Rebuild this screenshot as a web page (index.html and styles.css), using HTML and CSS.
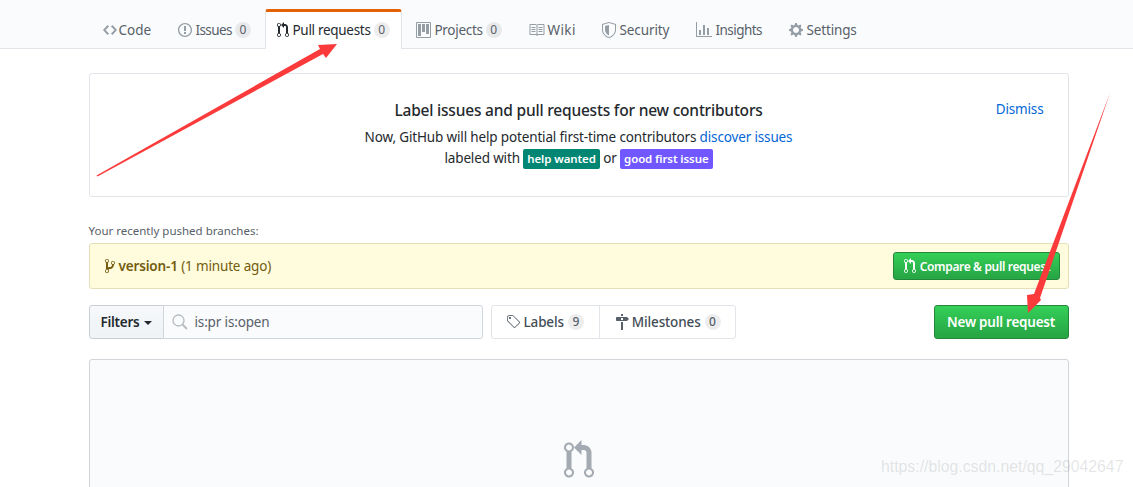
FILE: index.html
```html
<!DOCTYPE html>
<html lang="en">
<head>
<meta charset="utf-8">
<title>Pull requests</title>
<link rel="stylesheet" href="styles.css">
</head>
<body>
<nav class="tabbar">
  <div class="container tabs">
    <a class="tab t-code"><svg class="ic" width="16" height="16" viewBox="0 0 14 16"><path d="M9.5 3 8 4.5 11.5 8 8 11.5 9.5 13 14 8zm-5 0L0 8l4.500 5L6 11.500 2.500 8 6 4.500z"/></svg>Code</a>
    <a class="tab t-issues"><svg class="ic" width="14" height="16" viewBox="0 0 14 16"><path d="M7 2.300c3.140 0 5.700 2.560 5.700 5.700s-2.560 5.700-5.700 5.700A5.710 5.710 0 0 1 1.300 8c0-3.140 2.560-5.700 5.700-5.700zM7 1C3.140 1 0 4.140 0 8s3.140 7 7 7 7-3.140 7-7-3.140-7-7-7zm1 3H6v5h2V4zm0 6H6v2h2v-2z"/></svg>Issues<span class="count">0</span></a>
    <a class="tab selected"><svg class="ic" width="12" height="16" viewBox="0 0 12 16"><path d="M11 11.280V5c-.030-.780-.340-1.470-.940-2.060C9.460 2.350 8.780 2.030 8 2H7V0L4 3l3 3V4h1c.270.020.480.110.690.310.210.200.300.420.310.690v6.280A1.993 1.993 0 0 0 10 15a1.993 1.993 0 0 0 1-3.720zm-1 2.920c-.660 0-1.200-.550-1.200-1.200 0-.650.550-1.200 1.200-1.200.650 0 1.200.550 1.200 1.200 0 .650-.550 1.200-1.200 1.200zM4 3c0-1.110-.890-2-2-2a1.993 1.993 0 0 0-1 3.720v6.560A1.993 1.993 0 0 0 2 15a1.993 1.993 0 0 0 1-3.720V4.720c.590-.340 1-.980 1-1.720zm-.800 10c0 .660-.550 1.200-1.200 1.200-.650 0-1.200-.550-1.200-1.200 0-.650.550-1.200 1.200-1.200.650 0 1.200.550 1.200 1.200zM2 4.200C1.340 4.200.800 3.650.800 3c0-.650.550-1.200 1.200-1.200.650 0 1.200.550 1.200 1.200 0 .650-.550 1.200-1.200 1.200z"/></svg>Pull requests<span class="count">0</span></a>
    <a class="tab t-projects"><svg class="ic" width="15" height="16" viewBox="0 0 15 16"><path fill-rule="evenodd" d="M10 12h3V2h-3v10zm-4-2h3V2H6v8zm-4 4h3V2H2v12zm-1 1h13V1H1v14zM14 0H1a1 1 0 0 0-1 1v14a1 1 0 0 0 1 1h13a1 1 0 0 0 1-1V1a1 1 0 0 0-1-1z"/></svg>Projects<span class="count">0</span></a>
    <a class="tab t-wiki"><svg class="ic" width="16" height="16" viewBox="0 0 16 16"><path d="M3 5h4v1H3V5zm0 3h4V7H3v1zm0 2h4V9H3v1zm11-5h-4v1h4V5zm0 2h-4v1h4V7zm0 2h-4v1h4V9zm2-6v9c0 .550-.450 1-1 1H9.500l-1 1-1-1H2c-.550 0-1-.450-1-1V3c0-.550.450-1 1-1h5.500l1 1 1-1H15c.550 0 1 .450 1 1zm-8 .500L7.500 3H2v9h6V3.500zm7-.500H9.500l-.500.500V12h6V3z" transform="translate(-.500 0)"/></svg>Wiki</a>
    <a class="tab t-security"><svg class="ic" width="14" height="16" viewBox="0 0 14 16"><path fill-rule="evenodd" d="M0 2l7-2 7 2v6.020C14 12.690 8.990 16 7 16c-1.990 0-7-3.310-7-7.980V2zm1 .750v5.270C1 11.990 5.370 15 7 15s6-3.010 6-6.980V2.750L7 1 1 2.750zM3 4l4-1v10.500C5.500 12.700 3 10.500 3 8V4z"/></svg>Security</a>
    <a class="tab t-insights"><svg class="ic" width="16" height="16" viewBox="0 0 16 16"><path d="M16 14v1H0V0h1v14h15zM5 13H3V8h2v5zm4 0H7V3h2v10zm4 0h-2V6h2v7z"/></svg>Insights</a>
    <a class="tab t-settings"><svg class="ic" width="14" height="16" viewBox="0 0 14 16"><path fill-rule="evenodd" d="M14 8.770v-1.600l-1.940-.640-.450-1.090.880-1.840-1.130-1.130-1.810.910-1.090-.450-.690-1.920h-1.600l-.630 1.940-1.110.450-1.840-.880-1.130 1.130.910 1.810-.450 1.090L0 7.230v1.590l1.940.640.450 1.090-.880 1.840 1.130 1.130 1.810-.910 1.090.450.690 1.920h1.590l.630-1.940 1.110-.450 1.840.880 1.130-1.130-.920-1.810.470-1.090L14 8.750v.020zM7 11c-1.660 0-3-1.340-3-3s1.340-3 3-3 3 1.340 3 3-1.340 3-3 3z"/></svg>Settings</a>
  </div>
</nav>

<main class="container">
  <section class="banner">
    <a class="dismiss">Dismiss</a>
    <h2 class="banner-title">Label issues and pull requests for new contributors</h2>
    <p class="banner-text">Now, GitHub will help potential first-time contributors <a class="link">discover issues</a><br>labeled with <span class="label teal">help wanted</span> or <span class="label purple">good first issue</span></p>
  </section>

  <p class="pushed-title">Your recently pushed branches:</p>
  <div class="pushed">
    <div class="pushed-info"><svg class="branch" width="10" height="16" viewBox="0 0 10 16"><path d="M10 5c0-1.110-.890-2-2-2a1.993 1.993 0 0 0-1 3.720v.300c-.020.520-.230.980-.630 1.380-.400.400-.860.610-1.380.630-.830.020-1.480.160-2 .450V4.720a1.993 1.993 0 0 0-1-3.720C.880 1 0 1.890 0 3a2 2 0 0 0 1 1.720v6.560c-.590.350-1 .990-1 1.720 0 1.110.890 2 2 2 1.110 0 2-.890 2-2 0-.530-.200-1-.530-1.360.090-.060.480-.410.590-.470.250-.110.560-.170.940-.170 1.050-.050 1.950-.450 2.750-1.250S8.950 7.770 9 6.730h-.020C9.590 6.370 10 5.730 10 5zM2 1.800c.660 0 1.200.550 1.200 1.200 0 .650-.550 1.200-1.200 1.200C1.350 4.200.800 3.650.800 3c0-.650.550-1.200 1.200-1.200zm0 12.410c-.660 0-1.200-.550-1.200-1.200 0-.650.550-1.200 1.200-1.200.650 0 1.200.550 1.200 1.200 0 .650-.550 1.200-1.200 1.200zm6-8c-.660 0-1.200-.550-1.200-1.200 0-.650.550-1.200 1.200-1.200.650 0 1.200.550 1.200 1.200 0 .650-.550 1.200-1.200 1.200z"/></svg><strong>version-1</strong> (1 minute ago)</div>
    <a class="btn-green small"><svg class="btn-ic" width="12" height="16" viewBox="0 0 12 16"><path d="M11 11.280V5c-.030-.780-.340-1.470-.940-2.060C9.460 2.350 8.780 2.030 8 2H7V0L4 3l3 3V4h1c.270.020.480.110.690.310.210.200.300.420.310.690v6.280A1.993 1.993 0 0 0 10 15a1.993 1.993 0 0 0 1-3.720zm-1 2.920c-.660 0-1.200-.550-1.200-1.200 0-.650.550-1.200 1.200-1.200.650 0 1.200.550 1.200 1.200 0 .650-.550 1.200-1.200 1.200zM4 3c0-1.110-.890-2-2-2a1.993 1.993 0 0 0-1 3.720v6.560A1.993 1.993 0 0 0 2 15a1.993 1.993 0 0 0 1-3.720V4.720c.590-.340 1-.980 1-1.720zm-.800 10c0 .660-.550 1.200-1.200 1.200-.650 0-1.200-.550-1.200-1.200 0-.650.550-1.200 1.200-1.200.650 0 1.200.550 1.200 1.200zM2 4.200C1.340 4.200.800 3.650.800 3c0-.650.550-1.200 1.200-1.200.650 0 1.200.550 1.200 1.200 0 .650-.550 1.200-1.200 1.200z"/></svg>Compare &amp; pull request</a>
  </div>

  <div class="toolbar">
    <div class="search">
      <button class="filters">Filters<span class="caret"></span></button>
      <div class="search-input"><svg class="search-ic" width="16" height="16" viewBox="0 0 16 16"><circle cx="6.500" cy="6.500" r="5.500" fill="none" stroke="currentColor" stroke-width="1.300"/><path d="M10.500 10.500 15 15" stroke="currentColor" stroke-width="1.800" fill="none"/></svg>is:pr is:open</div>
    </div>
    <div class="nav-links">
      <a class="nav-link"><svg class="nav-ic" width="15" height="16" viewBox="0 0 15 16"><path d="M7.730 1.730C7.260 1.260 6.620 1 5.960 1H3.500C2.130 1 1 2.130 1 3.500v2.470c0 .660.270 1.300.730 1.770l6.060 6.060c.390.390 1.020.390 1.410 0l4.590-4.590a.996.996 0 0 0 0-1.410L7.730 1.730zM2.380 7.090c-.310-.300-.470-.700-.470-1.130V3.500c0-.880.720-1.600 1.600-1.600h2.470c.420 0 .830.160 1.130.470l6.140 6.130-4.730 4.730-6.140-6.140zM3.010 3h2v2H3V3h.010z"/></svg>Labels<span class="count">9</span></a>
      <a class="nav-link"><svg class="nav-ic dark" width="14" height="16" viewBox="0 0 14 16"><path fill-rule="evenodd" d="M8 2H6V0h2v2zm4 5H2c-.550 0-1-.450-1-1V4c0-.550.450-1 1-1h10l2 2-2 2zM8 4H6v2h2V4zM6 16h2V8H6v8z"/></svg>Milestones<span class="count">0</span></a>
    </div>
    <a class="btn-green large">New pull request</a>
  </div>

  <section class="blank">
    <svg class="blank-ic" width="30" height="40" viewBox="0 0 12 16"><path d="M11 11.280V5c-.030-.780-.340-1.470-.940-2.060C9.460 2.350 8.780 2.030 8 2H7V0L4 3l3 3V4h1c.270.020.480.110.690.310.210.200.300.420.310.690v6.280A1.993 1.993 0 0 0 10 15a1.993 1.993 0 0 0 1-3.720zm-1 2.920c-.660 0-1.200-.550-1.200-1.200 0-.650.550-1.200 1.200-1.200.650 0 1.200.550 1.200 1.200 0 .650-.550 1.200-1.200 1.200zM4 3c0-1.110-.890-2-2-2a1.993 1.993 0 0 0-1 3.720v6.560A1.993 1.993 0 0 0 2 15a1.993 1.993 0 0 0 1-3.720V4.720c.590-.340 1-.980 1-1.720zm-.800 10c0 .660-.550 1.200-1.200 1.200-.650 0-1.200-.550-1.200-1.200 0-.650.550-1.200 1.200-1.200.650 0 1.200.550 1.200 1.200zM2 4.200C1.340 4.200.800 3.650.800 3c0-.650.550-1.200 1.200-1.200.650 0 1.200.550 1.200 1.200 0 .650-.550 1.200-1.200 1.200z"/></svg>
  </section>
</main>

<svg class="arrows" width="1133" height="487" viewBox="0 0 1133 487">
  <polygon points="96.500,175.500 320,49 318,45 337,44 326,58 323,54 97.500,176.500"/>
  <polygon points="1110,93 1040,298 1041,300 1028,313 1027,295 1034,294"/>
</svg>
<span class="watermark">https://blog.csdn.net/qq_29042647</span>
</body>
</html>
```

FILE: styles.css
```css
* { box-sizing: border-box; }
html, body { margin: 0; height: 487px; overflow: hidden; }
body {
  background: #fff;
  color: #24292e;
  font-family: "Noto Sans", "Open Sans", sans-serif;
  font-size: 13.500px;
  letter-spacing: -.15px;
  position: relative;
}
.container { width: 980px; margin: 0 auto; position: relative; left: 12px; }
.tabbar { height: 49px; background: #fafbfc; border-bottom: 1px solid #e1e4e8; }
.tabs { display: flex; height: 49px; padding-top: 9px; }
.tab {
  display: flex; align-items: center; height: 40px;
  padding: 2px 0 1px 13px; color: #586069; white-space: nowrap;
  letter-spacing: -.3px;
}
.tab .ic { fill: #959da5; margin-right: 4px; flex: none; }
.t-code { flex: 0 0 76px; letter-spacing: 0; }
.t-code .ic { margin-right: 1px; }
.t-issues { flex: 0 0 100px; letter-spacing: -.6px; }
.t-issues .count { margin-left: 3px; }
.t-projects { flex: 0 0 113px; padding-left: 14px; }
.t-projects .count { margin-left: 3px; }
.t-wiki { flex: 0 0 74px; padding-left: 14px; letter-spacing: .4px; }
.t-wiki .ic { margin-right: 3px; }
.t-security { flex: 0 0 94px; letter-spacing: -.1px; }
.t-insights { flex: 0 0 93px; letter-spacing: -.55px; }
.t-settings { letter-spacing: -.15px; }
.tab.selected {
  flex: 0 0 137px;
  color: #24292e; background: #fff;
  border: 1px solid #e1e4e8; border-top: 3px solid #e36209; border-bottom: 0;
  border-radius: 3px 3px 0 0; padding: 0 0 2px 11px;
}
.tab.selected .ic { fill: #24292e; }
.tab.selected .count { margin-left: 3px; }
.count {
  display: inline-block; min-width: 16px; padding: 0 4px; margin-left: 4px;
  font-size: 12px; line-height: 16px; text-align: center; letter-spacing: 0;
  background: rgba(27,31,35,.08); border-radius: 20px; color: #586069;
}
.banner {
  position: relative; height: 124px; margin-top: 24px;
  border: 1px solid #e1e4e8; border-radius: 3px; text-align: center; padding-top: 25px;
}
.dismiss { position: absolute; right: 24px; top: 26px; color: #0366d6; }
.banner-title { margin: 0 0 6px; font-size: 15.500px; font-weight: 500; line-height: 22px; letter-spacing: -.2px; }
.banner-text { margin: 0; line-height: 21px; }
.link { color: #0366d6; }
.label {
  display: inline-block; padding: 0 4px; line-height: 20px; border-radius: 2px;
  color: #fff; font-size: 11.500px; font-weight: 600; letter-spacing: -.1px;
}
.teal { background: #008672; }
.purple { background: #7057ff; }
.pushed-title { margin: 26px 0 4px; font-size: 11.500px; line-height: 16px; color: #586069; letter-spacing: 0; }
.pushed {
  display: flex; align-items: center; justify-content: space-between;
  height: 46px; padding: 0 8px 0 15px;
  background: #fffbdd; border: 1px solid #e5dfb8; border-radius: 3px; color: #735c0f;
}
.pushed-info { display: flex; align-items: center; white-space: pre; }
.pushed-info strong { font-weight: 600; }
.branch { fill: #735c0f; margin-right: 4px; }
.btn-green {
  display: flex; align-items: center; justify-content: center;
  color: #fff; font-weight: 600;
  background: linear-gradient(#34d058, #28a745 90%);
  border: 1px solid #23863b; border-radius: 3px; white-space: nowrap;
}
.small { width: 167px; height: 28px; font-size: 12px; letter-spacing: -.35px; padding-left: 2px; }
.btn-ic { fill: #fff; margin-right: 4px; }
.large { width: 135px; height: 34px; letter-spacing: -.25px; }
.toolbar { display: flex; align-items: center; margin-top: 16px; height: 34px; }
.search { display: flex; width: 394px; height: 34px; }
.filters {
  width: 75px; font: inherit; font-weight: 600; color: #24292e; letter-spacing: -.25px;
  background: linear-gradient(#f6f8fa, #eff3f6);
  border: 1px solid #c9ced4; border-radius: 3px 0 0 3px; padding: 0;
}
.caret {
  display: inline-block; margin-left: 4px; vertical-align: 2px;
  border: 4px solid transparent; border-top-color: #24292e; border-bottom: 0;
}
.search-input {
  flex: 1; display: flex; align-items: center; padding-left: 8px; margin-left: -1px;
  background: #fafbfc; border: 1px solid #d1d5da; border-radius: 0 3px 3px 0; color: #586069;
}
.search-ic { color: #b5bac0; margin-right: 7px; }
.nav-links {
  display: flex; height: 34px; margin-left: 8px;
  border: 1px solid #e1e4e8; border-radius: 3px;
}
.nav-link { display: flex; align-items: center; padding: 0 15px 0 14px; font-weight: 500; color: #444d56; }
.nav-link + .nav-link { border-left: 1px solid #e1e4e8; padding: 0 14px 0 15px; }
.nav-ic { fill: #6a737d; margin-right: 3px; }
.nav-ic.dark { fill: #586069; }
.toolbar .large { margin-left: auto; }
.blank {
  display: flex; justify-content: center; align-items: flex-start;
  height: 200px; margin-top: 20px; padding-top: 80px;
  background: #fafbfc; border: 1px solid #d1d5da; border-radius: 3px;
}
.blank-ic { fill: #a3aab1; }
.arrows { position: absolute; left: 0; top: 0; pointer-events: none; }
.arrows polygon { fill: #fb3b3b; }
.watermark {
  position: absolute; left: 881px; top: 458px;
  font-family: "Liberation Sans", sans-serif; font-size: 15.800px; letter-spacing: 0;
  color: rgba(120,125,130,.2); white-space: nowrap;
}
```
